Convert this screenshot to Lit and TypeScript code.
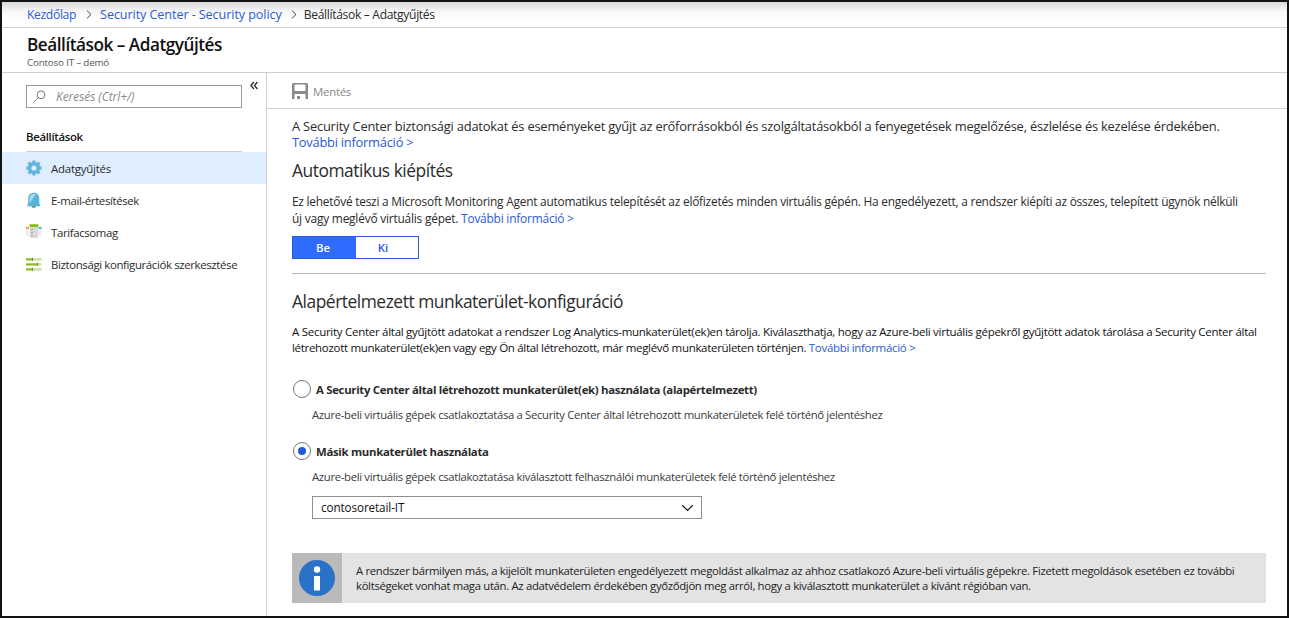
import { LitElement, html, css, svg } from "lit";
import { customElement, state } from "lit/decorators.js";
import { classMap } from "lit/directives/class-map.js";

const gearTeeth = [0, 45, 90, 135, 180, 225, 270, 315];

const icons = {
  gear: svg`<svg width="16" height="16" viewBox="0 0 16 16">
    <g fill="#62b3dc">${gearTeeth.map(
      (a) => svg`<path d="M6 3.500 6.500.4h3L10 3.500z" transform="rotate(${a} 8 8)"/>`
    )}</g>
    <circle cx="8" cy="8" r="4.200" fill="none" stroke="#62b3dc" stroke-width="3.200"/></svg>`,
  bell: svg`<svg width="16" height="16" viewBox="0 0 16 16">
    <path d="M5.500 14h4.500c0 1-.8 1.800-2.200 1.800S5.500 15 5.500 14z" fill="#7a7a7a"/>
    <path d="M1.200 14.200v-1.200l1-1.200V6.500C2.200 3 4.500.8 7.800.8s5.500 2.200 5.500 5.700v5.300l1 1.200v1.200z" fill="#59b4d9"/>
    <path d="M3.300 10.500V6.500c0-3 2-4.600 4.500-4.600 1.200 0 1.600.3 2 .6L4 10.500z" fill="#a9d8ec"/></svg>`,
  tier: svg`<svg width="16" height="16" viewBox="0 0 16 16">
    <path d="M0 3.500h3V12H0zM12.500 3.500H15.500V12h-3z" fill="#ededed"/>
    <path d="M0 3h3v1.800H0z" fill="#ff9a1f"/><path d="M12.500 3h3v1.800h-3z" fill="#4aa9d8"/>
    <path d="M3.800 2h8.400v12H3.800z" fill="#dadada"/><path d="M3.500.3h8.800v2.500H3.500z" fill="#7fba00"/>
    <path d="m5 5.500.7.700 1-1.300M5 8.500l.7.700 1-1.300M5 11.500l.7.700 1-1.300" fill="none" stroke="#777" stroke-width=".7"/></svg>`,
  sliders: svg`<svg width="16" height="16" viewBox="0 0 16 16">
    <path d="M0 2h15.500v2.700H0zM0 7h15.500v2.700H0zM0 12h15.500v2.700H0z" fill="#cfe2a8"/>
    <path d="M0 2.500h6v1.700H0zM0 7.500h11v1.700H0zM0 12.500h6v1.700H0z" fill="#84bb14"/>
    <path d="M6 1.800h1v3H6zM11 6.800h1v3h-1zM6 11.800h1v3H6z" fill="#777"/></svg>`,
};

const menu = [
  { icon: icons.gear, label: "Adatgyűjtés", wide: true },
  { icon: icons.bell, label: "E-mail-értesítések" },
  { icon: icons.tier, label: "Tarifacsomag" },
  { icon: icons.sliders, label: "Biztonsági konfigurációk szerkesztése" },
];

const options = [
  {
    title: "A Security Center által létrehozott munkaterület(ek) használata (alapértelmezett)",
    hint: "Azure-beli virtuális gépek csatlakoztatása a Security Center által létrehozott munkaterületek felé történő jelentéshez",
  },
  {
    title: "Másik munkaterület használata",
    hint: "Azure-beli virtuális gépek csatlakoztatása kiválasztott felhasználói munkaterületek felé történő jelentéshez",
  },
];

const more = html`<a class="link">További információ &gt;</a>`;

@customElement("app-root")
export class AppRoot extends LitElement {
  @state() private active = 0;
  @state() private provisioning = true;
  @state() private workspace = 1;

  static styles = css`
    :host {
      display: flex; flex-direction: column; box-sizing: border-box;
      width: 1289px; height: 618px; border: 2px solid #131313; background: #fff;
      color: #2b2b2b; font-family: "Open Sans", "Noto Sans", sans-serif; overflow: hidden;
    }
    * { box-sizing: border-box; }
    svg { display: block; flex: none; }
    .link { color: #2a5bd7; cursor: pointer; }
    .line { display: block; white-space: nowrap; }
    .crumbs {
      display: flex; align-items: center; flex: none; height: 26px; padding-left: 25px;
      border-bottom: 1px solid #cfcfcf; white-space: nowrap;
      background: linear-gradient(#d9d9d9, #f6f6f6 9px, #fff 17px);
      font-size: 12.100px; line-height: 24px; letter-spacing: -0.33px;
    }
    .crumbs svg { margin: 0 8px 0 10px; }
    .crumbs .policy { font-size: 12.600px; letter-spacing: -0.08px; }
    .crumbs .policy + svg { margin: 0 7px 0 9px; }
    .title { flex: none; height: 45px; padding: 4px 0 0 25px; border-bottom: 1px solid #cfcfcf; }
    h1 { margin: 0; color: #111; font-size: 17.200px; font-weight: 600; line-height: 25px; letter-spacing: -0.48px; }
    .sub { font-size: 9.800px; line-height: 11px; letter-spacing: -0.18px; color: #555; }
    .body { display: flex; flex: 1; min-height: 0; }
    nav { flex: none; width: 265px; border-right: 1px solid #cfcfcf; }
    .find { display: flex; justify-content: space-between; padding: 12px 8px 0 24px; }
    .search {
      display: flex; align-items: center; width: 216px; height: 23px; padding-left: 7px; gap: 9px;
      border: 1px solid #9a9a9a; color: #8a8a8a; font-size: 12px; font-style: italic; line-height: 21px;
      letter-spacing: -0.07px;
    }
    .search svg { margin-left: -1px; margin-right: 1px; }
    .find > svg { margin-top: -4px; }
    h3 {
      margin: 0 24px 0; padding-top: 20px; height: 44px; border-bottom: 1px solid #cfcfcf; color: #111;
      font-size: 11.400px; font-weight: 600; line-height: 18px; letter-spacing: -0.32px;
    }
    .item {
      display: flex; align-items: center; gap: 9px; height: 32px; padding-left: 24px; cursor: pointer;
      font-size: 11.400px; line-height: 31px; letter-spacing: -0.355px; white-space: nowrap;
    }
    .item span { padding-top: 1px; }
    .item.wide { letter-spacing: -0.2px; }
    .item.on { background: #dfeeff; }
    main { flex: 1; min-width: 0; display: flex; flex-direction: column; }
    .tools {
      display: flex; align-items: center; flex: none; gap: 5px; height: 36px; padding-left: 25px;
      border-bottom: 1px solid #cfcfcf; color: #8a8a8a; font-size: 11.400px; letter-spacing: -0.25px;
    }
    .tools span { padding-top: 2px; }
    .content { display: flex; flex-direction: column; padding: 9px 21px 0 25px; }
    .lead { font-size: 12.900px; line-height: 16px; letter-spacing: -0.211px; }
    .lead .link { letter-spacing: -0.25px; }
    h2 { margin: 8px 0 0; font-size: 17.400px; font-weight: 400; line-height: 24px; letter-spacing: -0.465px; }
    .auto { margin-top: 11px; font-size: 11.900px; line-height: 17px; letter-spacing: -0.233px; }
    .auto .line + .line { letter-spacing: -0.2px; }
    .toggle { display: flex; margin-top: 9px; width: 127px; height: 23px; border: 1px solid #2a5bd7; }
    .toggle button {
      width: 63px; padding: 0 3px 0 0; border: 0; background: #fff; color: #2a5bd7; cursor: pointer;
      font: 600 11.400px/21px "Open Sans", sans-serif;
    }
    .toggle button + button { width: 62px; padding-right: 8px; }
    .toggle button.on { background: #2f6bff; color: #fff; }
    .rule { height: 1px; margin-top: 14px; background: #b5b5b5; }
    .rule + h2 { margin-top: 15px; }
    .desc { margin-top: 11px; color: #111; font-size: 11.500px; line-height: 16px; letter-spacing: -0.275px; }
    .desc .line + .line { letter-spacing: -0.306px; }
    .radio {
      display: flex; align-items: center; gap: 5px; height: 18px; margin-top: 19px; cursor: pointer;
      font-size: 11.400px; font-weight: 700; line-height: 18px; letter-spacing: -0.305px; white-space: nowrap;
    }
    .radio span { padding-top: 1px; }
    .desc + .radio { margin-top: 24px; }
    .dot {
      display: grid; place-items: center; width: 18px; height: 18px; margin-left: 1px;
      border: 1px solid #777; border-radius: 50%;
    }
    .dot.on::after { content: ""; width: 8px; height: 8px; border-radius: 50%; background: #2459d9; }
    .hint {
      margin: 9px 0 0 20px; color: #3a3a3a; font-size: 11.300px; line-height: 16px;
      letter-spacing: -0.32px; white-space: nowrap;
    }
    .select {
      display: flex; align-items: center; justify-content: space-between; width: 390px; height: 23px;
      margin: 11px 0 0 20px; padding: 0 7px 0 8px; border: 1px solid #8f8f8f; color: #111;
      font-size: 11.700px; line-height: 21px; letter-spacing: -0.1px;
    }
    .notice { display: flex; height: 50px; margin-top: 34px; background: #e3e3e3; }
    .badge { display: grid; place-items: center; flex: none; width: 50px; background: #bababa; }
    .notice p {
      align-self: center; margin: 0 0 0 14px; color: #222; font-size: 11.300px; line-height: 15.500px;
      letter-spacing: -0.308px;
    }
  `;

  render() {
    const sep = svg`<svg width="6" height="9" viewBox="0 0 6 9"><path d="M1 .6 5 4.500 1 8.400" fill="none" stroke="#444"/></svg>`;
    return html`
      <div class="crumbs">
        <a class="link">Kezdőlap</a>${sep}<a class="link policy">Security Center - Security policy</a>${sep}<span
          >Beállítások – Adatgyűjtés</span>
      </div>
      <header class="title">
        <h1>Beállítások – Adatgyűjtés</h1>
        <div class="sub">Contoso IT – demó</div>
      </header>
      <div class="body">
        <nav>
          <div class="find">
            <div class="search">
              <svg width="13" height="13" viewBox="0 0 13 13" fill="none" stroke="#777">
                <circle cx="8" cy="4.800" r="3.900" /><path d="M5.200 7.600.6 12.200" />
              </svg>
              <span>Keresés (Ctrl+/)</span>
            </div>
            <svg width="8" height="9" viewBox="0 0 8 9" fill="none" stroke="#222" stroke-width="1.200">
              <path d="M3.900 1 .9 4.500l3 3.500M7.400 1l-3 3.500 3 3.500" />
            </svg>
          </div>
          <h3>Beállítások</h3>
          ${menu.map(
            (m, i) => html`<div
              class=${classMap({ item: true, on: i === this.active, wide: !!m.wide })}
              @click=${() => (this.active = i)}
            >${m.icon}<span>${m.label}</span></div>`
          )}
        </nav>
        <main>
          <div class="tools">
            <svg width="16" height="16" viewBox="0 0 16 16" fill="#8a8a8a">
              <path fill-rule="evenodd" d="M1 0h14l1 1v15h-2.500v-5H2.500v5H0V1zM2.500 1.500v6.500h11v-6.500zM5 13h3v3H5z" />
            </svg>
            <span>Mentés</span>
          </div>
          <div class="content">
            <div class="lead">
              <span class="line">A Security Center biztonsági adatokat és eseményeket gyűjt az erőforrásokból és szolgáltatásokból a fenyegetések megelőzése, észlelése és kezelése érdekében.</span>
              <span class="line">${more}</span>
            </div>
            <h2>Automatikus kiépítés</h2>
            <div class="auto">
              <span class="line">Ez lehetővé teszi a Microsoft Monitoring Agent automatikus telepítését az előfizetés minden virtuális gépén. Ha engedélyezett, a rendszer kiépíti az összes, telepített ügynök nélküli</span>
              <span class="line">új vagy meglévő virtuális gépet. ${more}</span>
            </div>
            <div class="toggle">
              <button class=${classMap({ on: this.provisioning })} @click=${() => (this.provisioning = true)}>Be</button>
              <button class=${classMap({ on: !this.provisioning })} @click=${() => (this.provisioning = false)}>Ki</button>
            </div>
            <div class="rule"></div>
            <h2>Alapértelmezett munkaterület-konfiguráció</h2>
            <div class="desc">
              <span class="line">A Security Center által gyűjtött adatokat a rendszer Log Analytics-munkaterület(ek)en tárolja. Kiválaszthatja, hogy az Azure-beli virtuális gépekről gyűjtött adatok tárolása a Security Center által</span>
              <span class="line">létrehozott munkaterület(ek)en vagy egy Ön által létrehozott, már meglévő munkaterületen történjen. ${more}</span>
            </div>
            ${options.map(
              (o, i) => html`<div class="radio" @click=${() => (this.workspace = i)}>
                  <i class=${classMap({ dot: true, on: i === this.workspace })}></i><span>${o.title}</span>
                </div>
                <div class="hint">${o.hint}</div>`
            )}
            <div class="select">
              <span>contosoretail-IT</span>
              <svg width="13" height="8" viewBox="0 0 13 8"><path d="m1.200 1.200 5.300 5.200 5.300-5.200" fill="none" stroke="#222" stroke-width="1.300" /></svg>
            </div>
            <div class="notice">
              <div class="badge">
                <svg width="36" height="36" viewBox="0 0 36 36">
                  <circle cx="18" cy="18" r="18" fill="#2a72c8" />
                  <circle cx="18" cy="9.500" r="3.200" fill="#fff" /><path d="M15 16h6v14.500h-6z" fill="#fff" />
                </svg>
              </div>
              <p>
                <span class="line">A rendszer bármilyen más, a kijelölt munkaterületen engedélyezett megoldást alkalmaz az ahhoz csatlakozó Azure-beli virtuális gépekre. Fizetett megoldások esetében ez további</span>
                <span class="line">költségeket vonhat maga után. Az adatvédelem érdekében győződjön meg arról, hogy a kiválasztott munkaterület a kívánt régióban van.</span>
              </p>
            </div>
          </div>
        </main>
      </div>
    `;
  }
}
